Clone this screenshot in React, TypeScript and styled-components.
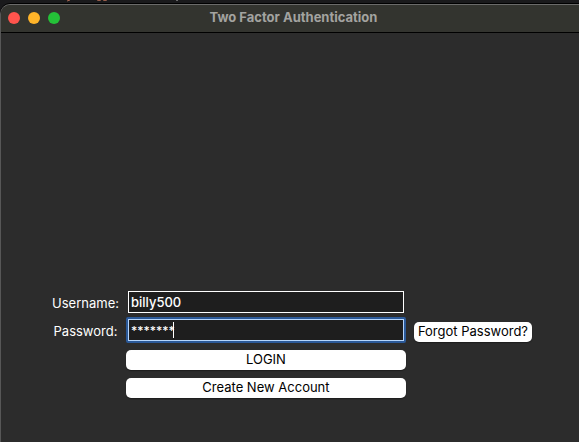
import React, { useState } from "react";
import styled, { createGlobalStyle } from "styled-components";

const GlobalStyle = createGlobalStyle`
  * { box-sizing: border-box; }
  body {
    margin: 0;
    background: #151517;
    font-family: Inter, "Liberation Sans", sans-serif;
    font-size: 13px;
    line-height: 16px;
    color: #fff;
  }
`;

const Desktop = styled.div`
  display: flex;
  flex-direction: column;
  min-height: 100vh;
  background: #1a1a1c;
`;

const Backdrop = styled.div`
  height: 3px;
  overflow: hidden;
`;

const BackdropText = styled.svg`
  display: block;
`;

const AppWindow = styled.main`
  flex: 1;
  display: flex;
  flex-direction: column;
  background: #2c2c2c;
  border-left: 1px solid #575757;
  border-top: 1px solid #6b6b6a;
  border-top-left-radius: 10px;
  box-shadow: 0 -1px 0 #000;
  margin-top: 1px;
  overflow: hidden;
`;

const TitleBar = styled.header`
  display: grid;
  grid-template-columns: 1fr auto 1fr;
  align-items: center;
  height: 28px;
  padding: 0 0 1px 7px;
  background: #33342f;
  border-bottom: 1px solid #000;
`;

const Lights = styled.div`
  display: flex;
  gap: 8px;
`;

const Light = styled.button<{ $color: string }>`
  width: 12px;
  height: 12px;
  padding: 0;
  border: 0;
  border-radius: 50%;
  background: ${(p) => p.$color};
`;

const Title = styled.h1`
  margin: 0;
  padding-bottom: 2px;
  font-size: 13px;
  font-weight: 700;
  color: #a3a3a0;
`;

const Content = styled.section`
  flex: 1;
  display: flex;
  flex-direction: column;
  justify-content: flex-end;
  padding: 0 47px 44px 50px;
`;

const Form = styled.form`
  display: grid;
  grid-template-columns: 67px minmax(0, 1fr) auto;
  column-gap: 8px;
  row-gap: 8px;
  align-items: center;
`;

const Label = styled.label`
  grid-column: 1;
  justify-self: center;
  padding: 0 0 2px 2px;
`;

const Field = styled.div<{ $focused?: boolean }>`
  grid-column: 2;
  position: relative;
  border: 2px solid ${(p) => (p.$focused ? "#2b5998" : "transparent")};
  border-radius: 2px;
  margin: -5px 0 -1px;
`;

const TextBox = styled.input<{ $focused?: boolean }>`
  display: block;
  width: 100%;
  height: 22px;
  padding: 0 2px;
  border: 1px solid ${(p) => (p.$focused ? "#b5d5fc" : "#fff")};
  border-radius: 0;
  outline: none;
  background: #1e1e1e;
  color: #fff;
  caret-color: transparent;
  font: inherit;
  font-size: ${(p) => (p.$focused ? 12 : 13)}px;
  font-weight: 500;
`;

const Caret = styled.span`
  position: absolute;
  top: 3px;
  left: 45px;
  width: 1px;
  height: 16px;
  background: #fff;
`;

const Button = styled.button<{ $column: number }>`
  grid-column: ${(p) => p.$column};
  height: 20px;
  padding: 0 4px 2px;
  border: 0;
  border-radius: 5px;
  background: #fff;
  color: #000;
  font: inherit;
  box-shadow: 0 1px 1px #1d1d1d;
`;

export default function App() {
  const [username, setUsername] = useState("billy500");
  const [password, setPassword] = useState("*******");

  return (
    <Desktop>
      <GlobalStyle />
      <Backdrop>
        <BackdropText width="190" height="3" viewBox="0 0 190 3" aria-hidden="true">
          <path d="M70 0l-3 1M97 0q2 1 4 0M103 0q2 1 4 0" stroke="#a96751" fill="none" />
          <path d="M177 0v1" stroke="#b9b9b9" fill="none" />
        </BackdropText>
      </Backdrop>
      <AppWindow>
        <TitleBar>
          <Lights>
            <Light $color="#ff544d" aria-label="Close" />
            <Light $color="#ffb429" aria-label="Minimize" />
            <Light $color="#24c138" aria-label="Zoom" />
          </Lights>
          <Title>Two Factor Authentication</Title>
        </TitleBar>
        <Content>
          <Form onSubmit={(e) => e.preventDefault()}>
            <Label htmlFor="username">Username:</Label>
            <Field>
              <TextBox
                id="username"
                value={username}
                onChange={(e) => setUsername(e.target.value)}
              />
            </Field>
            <Label htmlFor="password">Password:</Label>
            <Field $focused>
              <TextBox
                id="password"
                $focused
                autoComplete="off"
                value={password}
                onChange={(e) => setPassword(e.target.value)}
              />
              <Caret />
            </Field>
            <Button type="button" $column={3}>Forgot Password?</Button>
            <Button type="submit" $column={2}>LOGIN</Button>
            <Button type="button" $column={2}>Create New Account</Button>
          </Form>
        </Content>
      </AppWindow>
    </Desktop>
  );
}
